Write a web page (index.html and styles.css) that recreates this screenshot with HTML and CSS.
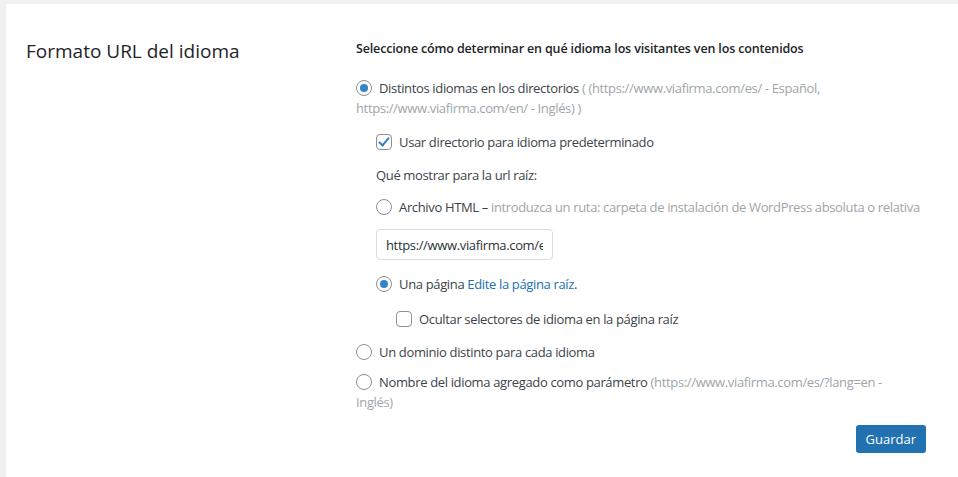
FILE: index.html
```html
<!DOCTYPE html>
<html lang="es">
<head>
    <meta charset="UTF-8">
    <title>Formato URL del idioma</title>
    <link rel="stylesheet" href="styles.css">
</head>
<body>
    <div class="panel">
        <div class="setting-row">
            <h2 class="setting-title">Formato URL del idioma</h2>
            <div class="setting-body">
                <div class="group-title">Seleccione cómo determinar en qué idioma los visitantes ven los contenidos</div>

                <label class="option opt-first">
                    <input type="radio" name="url-format" checked>
                    Distintos idiomas en los directorios <span class="note">( (https://www.viafirma.com/es/ - Español, https://www.viafirma.com/en/ - Inglés) )</span>
                </label>

                <div class="sub-options">
                    <label class="option opt-check">
                        <input type="checkbox" checked>
                        Usar directorio para idioma predeterminado
                    </label>

                    <div class="sub-label">Qué mostrar para la url raíz:</div>

                    <label class="option opt-file">
                        <input type="radio" name="root-url">
                        Archivo HTML – <span class="note">introduzca un ruta: carpeta de instalación de WordPress absoluta o relativa</span>
                    </label>

                    <input class="text-input" type="text" value="https://www.viafirma.com/es/">

                    <label class="option opt-page">
                        <input type="radio" name="root-url" checked>
                        Una página <a href="#">Edite la página raíz</a>.
                    </label>

                    <label class="option opt-hide">
                        <input type="checkbox">
                        Ocultar selectores de idioma en la página raíz
                    </label>
                </div>

                <label class="option opt-domain">
                    <input type="radio" name="url-format">
                    Un dominio distinto para cada idioma
                </label>

                <label class="option opt-param">
                    <input type="radio" name="url-format">
                    Nombre del idioma agregado como parámetro <span class="note">(https://www.viafirma.com/es/?lang=en - Inglés)</span>
                </label>

                <div class="actions">
                    <button class="button-primary" type="button">Guardar</button>
                </div>
            </div>
        </div>
    </div>
</body>
</html>
```

FILE: styles.css
```css
body {
    margin: 0;
    padding: 0;
    background-color: #f0f0f1;
    font-family: "Open Sans", "Noto Sans", sans-serif;
    font-size: 13px;
    line-height: 20px;
    letter-spacing: -0.35px;
    color: #3c434a;
}

.panel {
    margin: 4px 0 0 6px;
    background-color: #fff;
    min-height: 473px;
    box-sizing: border-box;
    padding: 35px 32px 20px 20px;
}

.setting-row {
    display: grid;
    grid-template-columns: 330px 562px;
}

.setting-title {
    margin: 0;
    font-size: 19px;
    font-weight: 400;
    line-height: 24px;
    letter-spacing: 0;
    color: #1d2327;
}

.group-title {
    font-weight: 600;
    color: #1d2327;
    font-size: 12.5px;
    letter-spacing: -0.15px;
}

.option {
    display: block;
}

.note {
    color: #a0a5aa;
}

.sub-options {
    padding-left: 20px;
    margin-right: -5px;
}

.opt-first { margin-top: 19px; }
.opt-check { margin-top: 14px; }
.sub-label { margin-top: 13px; }
.opt-file { margin-top: 12px; }
.opt-page { margin-top: 14px; }
.opt-hide { margin-top: 15px; margin-left: 20px; }
.opt-domain { margin-top: 13px; }
.opt-param { margin-top: 10px; }

.option a {
    color: #2271b1;
    text-decoration: none;
}

input[type="radio"], input[type="checkbox"] {
    -webkit-appearance: none;
    appearance: none;
    width: 16px;
    height: 16px;
    margin: 0 4px 0 0;
    border: 1px solid #8c8f94;
    background: #fff;
    box-sizing: border-box;
    vertical-align: -3px;
    position: relative;
}

input[type="radio"] {
    border-radius: 50%;
}

input[type="radio"]:checked::before {
    content: "";
    position: absolute;
    left: 3px;
    top: 3px;
    width: 8px;
    height: 8px;
    border-radius: 50%;
    background-color: #3582c4;
}

input[type="checkbox"] {
    border-radius: 4px;
}

input[type="checkbox"]:checked::before {
    content: "";
    position: absolute;
    left: 4px;
    top: 0px;
    width: 4px;
    height: 9px;
    border-right: 2.5px solid #3582c4;
    border-bottom: 2.5px solid #3582c4;
    transform: rotate(40deg);
}

.text-input {
    display: block;
    margin-top: 12px;
    width: 177px;
    height: 31px;
    box-sizing: border-box;
    padding: 0 9px;
    border: 1px solid #dcdcde;
    border-radius: 4px;
    font-family: inherit;
    font-size: 13px;
    letter-spacing: -0.35px;
    color: #2c3338;
}

.actions {
    margin-top: 13px;
    margin-right: -8px;
    text-align: right;
}

.button-primary {
    height: 28px;
    padding: 0 10px;
    border: none;
    border-radius: 3px;
    background-color: #2271b1;
    color: #fff;
    font-family: inherit;
    font-size: 13px;
    letter-spacing: 0;
    cursor: pointer;
}
```
